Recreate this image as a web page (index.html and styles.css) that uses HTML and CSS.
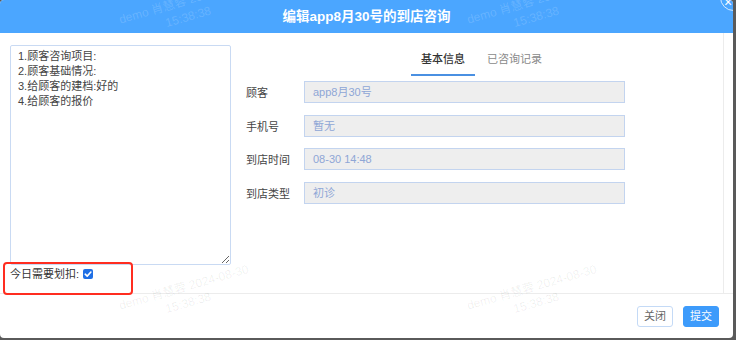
FILE: index.html
```html
<!DOCTYPE html>
<html lang="zh">
<head>
<meta charset="utf-8">
<title>编辑app8月30号的到店咨询</title>
<link rel="stylesheet" href="styles.css">
</head>
<body>
<div class="modal">
  <div class="header">
    <h1 class="title">编辑app8月30号的到店咨询</h1>
  </div>
  <div class="main">
    <div class="body">
      <div class="left">
        <textarea class="notes" readonly>1.顾客咨询项目:
2.顾客基础情况:
3.给顾客的建档:好的
4.给顾客的报价</textarea>
        <label class="check-row">今日需要划扣:<span class="check"><svg viewBox="0 0 10 10" width="10" height="10"><path d="M2.2 5.2 L4.2 7.1 L7.9 3" fill="none" stroke="#fff" stroke-width="1.6" stroke-linecap="round" stroke-linejoin="round"/></svg></span></label>
      </div>
      <div class="right">
        <div class="tabs">
          <span class="tab active">基本信息</span>
          <span class="tab">已咨询记录</span>
        </div>
        <div class="form">
          <div class="row"><span class="label">顾客</span><span class="field">app8月30号</span></div>
          <div class="row"><span class="label">手机号</span><span class="field">暂无</span></div>
          <div class="row"><span class="label">到店时间</span><span class="field">08-30 14:48</span></div>
          <div class="row"><span class="label">到店类型</span><span class="field">初诊</span></div>
        </div>
      </div>
    </div>
    <div class="gutter"></div>
  </div>
  <div class="footer">
    <button class="btn btn-plain">关闭</button>
    <button class="btn btn-primary">提交</button>
  </div>

  <div class="highlight"></div>
  <div class="close-btn">×</div>

  <div class="wm wm-head wm-a"><div>demo 肖慧蓉 2024-08-30</div><div>15:38:38</div></div>
  <div class="wm wm-head wm-b"><div>demo 肖慧蓉 2024-08-30</div><div>15:38:38</div></div>
  <div class="wm wm-c"><div>demo 肖慧蓉 2024-08-30</div><div>15:38:38</div></div>
  <div class="wm wm-d"><div>demo 肖慧蓉 2024-08-30</div><div>15:38:38</div></div>
</div>
</body>
</html>
```

FILE: styles.css
```css
* { box-sizing: border-box; }
html, body { margin: 0; padding: 0; }
body {
  width: 736px;
  height: 340px;
  background: #5a5a5a;
  font-family: "Liberation Sans", "Noto Sans CJK SC", sans-serif;
  font-size: 11px;
  color: #333;
  overflow: hidden;
}
.modal {
  position: relative;
  width: 733px;
  height: 338px;
  background: #fff;
  border-radius: 4px;
  overflow: hidden;
  display: flex;
  flex-direction: column;
}
.header {
  height: 33px;
  flex: none;
  background: #4ba6ff;
  display: flex;
  align-items: center;
  justify-content: center;
}
.title {
  margin: 0;
  color: #fff;
  font-size: 13.5px;
  font-weight: bold;
  line-height: 20px;
  padding-top: 1px;
}
.main {
  flex: none;
  height: 260px;
  display: flex;
}
.body {
  width: 724px;
  border-right: 1px solid #ececec;
  display: flex;
  padding: 12px 0 0 10px;
}
.gutter { flex: 1; }
.left {
  width: 221px;
  display: flex;
  flex-direction: column;
}
.notes {
  width: 221px;
  height: 220px;
  margin: 0;
  border: 1px solid #c9daf3;
  border-radius: 2px;
  padding: 3px 7px;
  font-family: "Liberation Sans", "Noto Sans CJK SC", sans-serif;
  font-size: 11px;
  line-height: 15px;
  color: #444;
  resize: both;
  outline: none;
  display: block;
}
.check-row {
  margin-top: 2px;
  line-height: 14px;
  height: 14px;
  display: flex;
  align-items: center;
  color: #333;
}
.check {
  width: 10px;
  height: 10px;
  margin-left: 4px;
  border-radius: 2px;
  background: #1f6fe5;
  display: inline-flex;
}
.check svg { display: block; }
.right {
  margin-left: 15px;
  width: 379px;
  display: flex;
  flex-direction: column;
}
.tabs {
  display: flex;
  margin-left: 165px;
  gap: 2px;
}
.tab {
  height: 31px;
  line-height: 29px;
  padding: 0 10px;
  color: #8a8a8a;
  border-bottom: 2px solid transparent;
}
.tab.active {
  color: #333;
  font-weight: 500;
  border-bottom-color: #4a90e2;
}
.form {
  margin-top: 5px;
  display: flex;
  flex-direction: column;
  gap: 11.5px;
}
.row {
  display: flex;
  align-items: center;
  height: 22px;
}
.label {
  width: 58px;
  color: #444;
}
.field {
  width: 321px;
  height: 22px;
  line-height: 20px;
  padding: 0 8px;
  background: #eeeeee;
  border: 1px solid #c3d4ef;
  color: #8ea6d6;
}
.footer {
  flex: 1;
  border-top: 1px solid #ececec;
  display: flex;
  justify-content: flex-end;
  align-items: flex-start;
  gap: 10px;
  padding: 12px 14px 0 0;
}
.btn {
  width: 36px;
  height: 21px;
  padding: 0;
  border-radius: 3px;
  font-family: "Liberation Sans", "Noto Sans CJK SC", sans-serif;
  font-size: 11px;
  line-height: 19px;
}
.btn-plain {
  background: #fff;
  border: 1px solid #c4daf6;
  color: #666;
}
.btn-primary {
  background: #3d9bfb;
  border: 1px solid #3d9bfb;
  color: #fff;
}
.highlight {
  position: absolute;
  left: 3px;
  top: 262px;
  width: 130px;
  height: 33px;
  border: 2px solid #ff2d20;
  border-radius: 4px;
  pointer-events: none;
}
.close-btn {
  position: absolute;
  left: 720px;
  top: -16px;
  width: 27px;
  height: 27px;
  border: 1px solid rgba(255,255,255,0.75);
  border-radius: 50%;
  color: #fff;
  font-size: 14px;
  line-height: 34px;
  text-indent: 3px;
  text-align: left;
}
.wm {
  position: absolute;
  width: 140px;
  text-align: center;
  font-size: 12px;
  line-height: 16px;
  color: rgba(0,0,0,0.07);
  transform: rotate(-16deg);
  white-space: nowrap;
  pointer-events: none;
}
.wm-head { color: rgba(255,255,255,0.16); }
.wm-a { left: 116px; top: -7px; }
.wm-b { left: 464px; top: -7px; }
.wm-c { left: 116px; top: 279px; }
.wm-d { left: 464px; top: 279px; }
```
